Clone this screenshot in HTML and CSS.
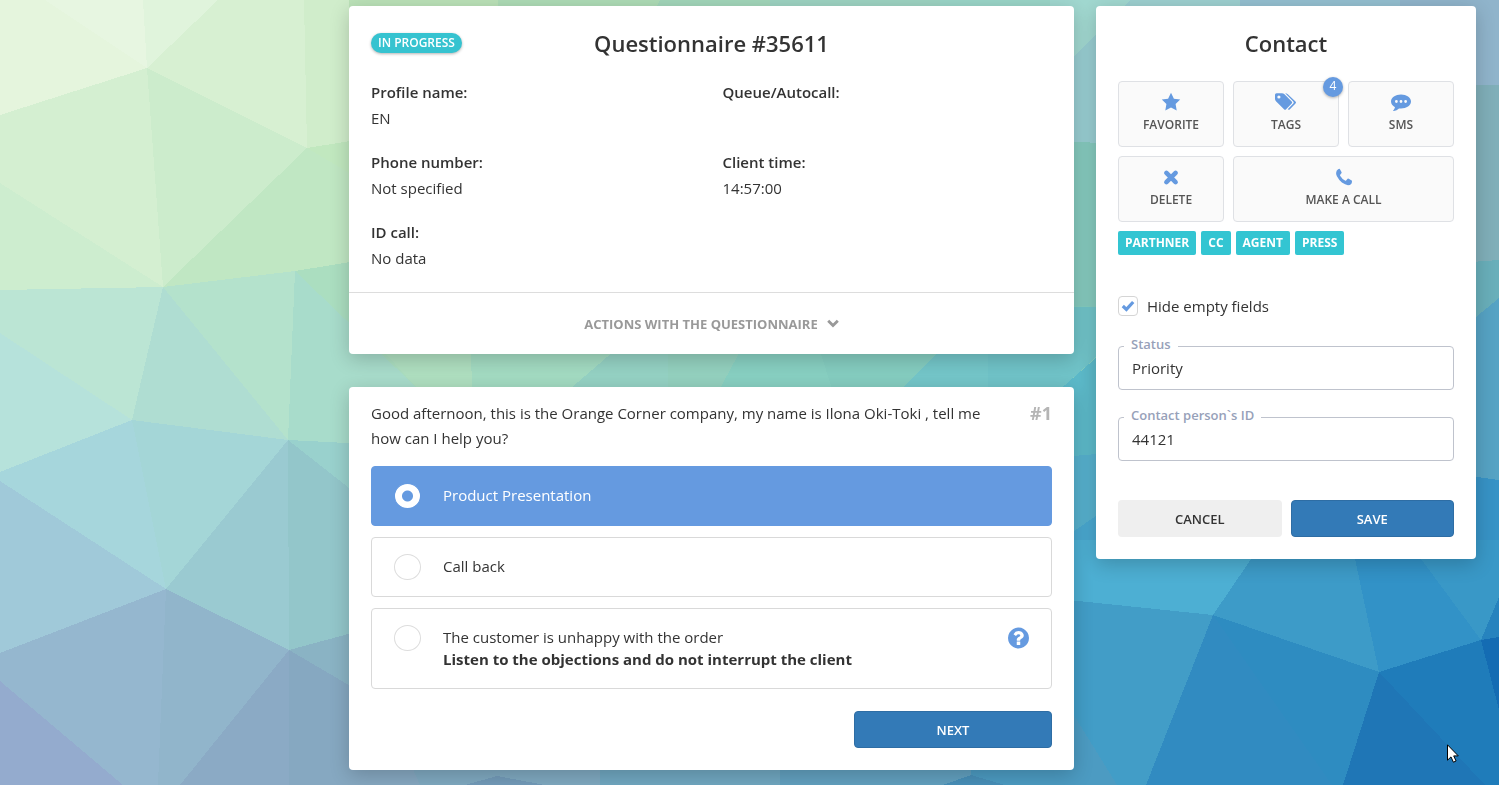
FILE: index.html
```html
<!DOCTYPE html>
<html lang="en">
<head>
  <meta charset="UTF-8">
  <meta name="viewport" content="width=device-width, initial-scale=1.0">
  <title>Questionnaire #35611</title>
  <link rel="stylesheet" href="styles.css">
</head>
<body>
  <!-- Low-poly background -->
  <svg class="backdrop" viewBox="0 0 1499 785" preserveAspectRatio="xMidYMid slice" aria-hidden="true">
    <rect width="1499" height="785" fill="#84cdbf"/>
    <polygon fill="#e5f5dd" points="0,0 147,0 147,68 0,115"/>
    <polygon fill="#e7f6e1" points="45,0 143,0 147,68"/>
    <polygon fill="#e0f4dc" points="143,0 218,0 147,68"/>
    <polygon fill="#d7f0d2" points="218,0 304,0 307,148 147,68"/>
    <polygon fill="#d0edcb" points="304,0 400,0 400,133 307,148"/>
    <polygon fill="#d4efd1" points="0,115 147,68 163,287 0,183"/>
    <polygon fill="#cdedcf" points="0,183 163,287 0,290"/>
    <polygon fill="#cceccc" points="147,68 307,148 163,287"/>
    <polygon fill="#c0e7c3" points="307,148 400,133 400,254 295,271 163,287"/>
    <polygon fill="#c1e8bf" points="307,148 400,133 400,203"/>
    <polygon fill="#bbe5d4" points="0,290 163,287 132,420 0,333"/>
    <polygon fill="#b6e2db" points="0,333 132,420 0,472"/>
    <polygon fill="#afddd2" points="163,287 288,440 132,420"/>
    <polygon fill="#b4e2cc" points="163,287 295,271 288,440"/>
    <polygon fill="#a8dccb" points="295,271 446,416 446,448 288,440"/>
    <polygon fill="#abdec0" points="295,271 400,254 470,354 446,416"/>
    <polygon fill="#a6d6dc" points="0,472 132,420 166,589 0,481"/>
    <polygon fill="#a4d6d7" points="132,420 288,440 166,589"/>
    <polygon fill="#a0c9d9" points="0,481 166,589 0,653"/>
    <polygon fill="#9acad1" points="288,440 289,650 166,589"/>
    <polygon fill="#93c6ca" points="288,440 400,528 400,620 289,650"/>
    <polygon fill="#99d1cd" points="288,440 446,448 400,528"/>
    <polygon fill="#95b7cf" points="0,653 166,589 162,785 123,785 0,681"/>
    <polygon fill="#91b5cb" points="166,589 289,650 180,785 158,785"/>
    <polygon fill="#94abce" points="0,681 123,785 0,785"/>
    <polygon fill="#8baac5" points="289,650 289,785 180,785"/>
    <polygon fill="#86a8c1" points="289,650 400,715 460,785 289,785"/>
    <polygon fill="#8ab3c4" points="289,650 400,620 400,715"/>
    <!-- top edge -->
    <polygon fill="#bbe2b8" points="349,0 498,0 498,40 349,40"/>
    <polygon fill="#aedcb6" points="498,0 660,0 640,40 498,40"/>
    <polygon fill="#a2d6ba" points="660,0 770,0 770,40 640,40"/>
    <polygon fill="#9dd3c2" points="770,0 940,0 940,40 770,40"/>
    <polygon fill="#9ad5c8" points="940,0 1130,0 1074,57 940,57"/>
    <!-- middle band -->
    <polygon fill="#afdfc0" points="355,320 470,320 473,420 446,420"/>
    <polygon fill="#a3dbc2" points="470,320 650,320 534,420 473,420"/>
    <polygon fill="#95d2c4" points="650,320 668,320 668,420 534,420"/>
    <polygon fill="#94d1bf" points="668,320 757,320 703,420 668,420"/>
    <polygon fill="#88d0c2" points="757,320 810,320 842,420 703,420"/>
    <polygon fill="#85cdc0" points="810,320 971,320 870,420 842,420"/>
    <polygon fill="#74c6c9" points="971,320 988,320 988,420 870,420"/>
    <polygon fill="#70c3c8" points="988,306 1096,307 1096,357 1063,387 988,420"/>
    <!-- gutter between the columns -->
    <polygon fill="#a1d8d0" points="1050,0 1132,0 1050,81"/>
    <polygon fill="#98cdd1" points="1130,0 1130,143 1050,142 1050,81"/>
    <polygon fill="#85c9bd" points="1050,142 1130,143 1130,307 1050,306"/>
    <polygon fill="#5cb9c9" points="1130,328 1130,451 1040,459 1040,407"/>
    <polygon fill="#56b0cd" points="1040,459 1130,451 1130,493 1040,554"/>
    <polygon fill="#49a7cf" points="1040,554 1130,493 1300,520 1251,559 1213,615 1040,597"/>
    <!-- top right -->
    <polygon fill="#9dd0d0" points="1130,0 1240,0 1240,30 1130,30"/>
    <polygon fill="#94bfd0" points="1240,0 1400,0 1400,30 1240,30"/>
    <polygon fill="#90b4cb" points="1400,0 1499,0 1499,85 1400,87"/>
    <polygon fill="#80afb9" points="1400,87 1499,85 1499,260 1400,267"/>
    <polygon fill="#69afba" points="1400,267 1499,260 1499,298 1400,380"/>
    <polygon fill="#56a3c4" points="1499,298 1499,480 1400,466 1400,380"/>
    <polygon fill="#3793c6" points="1400,466 1499,480 1499,597 1400,559"/>
    <!-- bottom right -->
    <polygon fill="#4dafd3" points="1040,540 1264,540 1213,615 1040,597"/>
    <polygon fill="#3d9bc8" points="1264,540 1351,540 1379,672 1213,615"/>
    <polygon fill="#3292c7" points="1351,540 1407,540 1481,640 1379,672"/>
    <polygon fill="#3998c7" points="1407,540 1499,540 1499,597 1481,640"/>
    <polygon fill="#2683be" points="1499,597 1499,637 1481,640"/>
    <polygon fill="#429dc7" points="1040,597 1213,615 1146,785 1040,785"/>
    <polygon fill="#4c9bc2" points="1040,660 1117,785 1040,785"/>
    <polygon fill="#318bc1" points="1213,615 1332,785 1146,785"/>
    <polygon fill="#2e8cc1" points="1213,615 1379,672 1343,785 1332,785"/>
    <polygon fill="#1f76b6" points="1379,672 1485,785 1343,785"/>
    <polygon fill="#1f7cba" points="1379,672 1481,640 1499,710 1499,785 1485,785"/>
    <polygon fill="#146cb3" points="1481,640 1499,637 1499,710"/>
    <!-- bottom edge -->
    <polygon fill="#7fa9c0" points="400,740 600,740 600,785 420,785"/>
    <polygon fill="#739bb9" points="465,785 497,776 545,785"/>
    <polygon fill="#70a7c0" points="600,740 780,740 780,785 600,785"/>
    <polygon fill="#62a0bf" points="780,740 971,740 971,785 780,785"/>
    <polygon fill="#4c9bc2" points="971,740 1050,740 1050,785 971,785"/>
    <polygon fill="#4890b9" points="943,785 971,775 1005,785"/>
  </svg>

  <main class="layout">
    <div class="column">
      <section class="card questionnaire">
        <div class="questionnaire-body">
          <header class="card-header">
            <span class="status-pill">IN PROGRESS</span>
            <h1 class="card-title">Questionnaire #35611</h1>
          </header>
          <dl class="details">
            <div>
              <dt>Profile name:</dt>
              <dd>EN</dd>
            </div>
            <div>
              <dt>Queue/Autocall:</dt>
              <dd></dd>
            </div>
            <div>
              <dt>Phone number:</dt>
              <dd>Not specified</dd>
            </div>
            <div>
              <dt>Client time:</dt>
              <dd>14:57:00</dd>
            </div>
            <div>
              <dt>ID call:</dt>
              <dd>No data</dd>
            </div>
          </dl>
        </div>
        <button class="actions-toggle" type="button">
          ACTIONS WITH THE QUESTIONNAIRE
          <svg class="chevron" viewBox="0 0 12 9" aria-hidden="true"><path d="M1.200 1.800 6 6.600 10.800 1.800" fill="none" stroke="currentColor" stroke-width="2.8"/></svg>
        </button>
      </section>

      <form class="card question">
        <div class="question-head">
          <p class="question-text">Good afternoon, this is the Orange Corner company, my name is Ilona Oki-Toki , tell me how can I help you?</p>
          <span class="question-number">#1</span>
        </div>
        <div class="options">
          <label class="option selected">
            <input type="radio" name="answer" checked>
            <span class="option-text">Product Presentation</span>
          </label>
          <label class="option">
            <input type="radio" name="answer">
            <span class="option-text">Call back</span>
          </label>
          <label class="option">
            <input type="radio" name="answer">
            <span class="option-text">The customer is unhappy with the order<strong>Listen to the objections and do not interrupt the client</strong></span>
            <svg class="help" viewBox="0 0 1536 1536" aria-hidden="true"><path fill="currentColor" d="M896 1248v-192q0-14-9-23t-23-9H672q-14 0-23 9t-9 23v192q0 14 9 23t23 9h192q14 0 23-9t9-23zm256-672q0-88-55.500-163T958 297t-170-41q-243 0-371 213-15 24 8 42l132 100q7 6 19 6 16 0 25-12 53-68 86-92 34-24 86-24 48 0 85.500 26t37.500 59q0 38-20 61t-68 45q-63 28-115.500 86.500T640 892v36q0 14 9 23t23 9h192q14 0 23-9t9-23q0-19 21.500-49.500T972 829q32-18 49-28.500t46-35 44.500-48 28-60.500 12.500-81zm384 192q0 209-103 385.500T1153.500 1433 768 1536t-385.500-103T103 1153.500 0 768t103-385.500T382.500 103 768 0t385.500 103T1433 382.500 1536 768z"/></svg>
          </label>
        </div>
        <button class="btn btn-primary btn-next" type="button">NEXT</button>
      </form>
    </div>

    <aside class="card contact">
      <h2 class="card-title">Contact</h2>
      <div class="tiles">
        <button class="tile" type="button">
          <svg viewBox="0 0 20 20" aria-hidden="true"><path d="M10 .8l2.900 5.900 6.300.9-4.600 4.500 1.100 6.400L10 15.500l-5.700 3 1.100-6.400L.8 7.600l6.300-.9z"/></svg>
          FAVORITE
        </button>
        <button class="tile" type="button">
          <svg viewBox="0 0 22 20" aria-hidden="true"><path fill-rule="evenodd" d="M0 2.700Q0 1.200 1.500 1.200h5.400q1.500 0 2.600 1.100l7.200 7.200q1 1.100 0 2.100l-5.600 5.600q-1.100 1-2.100 0L1.200 9.400Q0 8.200 0 6.900zM3.900 3.400a1.600 1.600 0 1 0 0 3.200 1.600 1.600 0 0 0 0-3.200z"/><path d="M10.200 1.200q1.500 0 2.600 1.100l7.700 7.200q1.100 1.100 0 2.100l-5.600 5.600q-1.100 1-2.200.1l5.600-5.700q1-1.100 0-2.100z"/></svg>
          TAGS
          <span class="tile-badge">4</span>
        </button>
        <button class="tile" type="button">
          <svg viewBox="0 0 20 20" aria-hidden="true"><path fill-rule="evenodd" d="M10 2.500c5.500 0 10 3.100 10 7s-4.500 7-10 7q-1 0-2-.1-2.200 2-5.100 2.600-.9.200-.8-.3 1.500-1.600 1.900-3.500C1.600 13.800 0 11.800 0 9.500c0-3.900 4.500-7 10-7zM5.400 8.100a1.400 1.400 0 1 0 0 2.800 1.400 1.400 0 0 0 0-2.800zm4.600 0a1.400 1.400 0 1 0 0 2.800 1.400 1.400 0 0 0 0-2.800zm4.600 0a1.400 1.400 0 1 0 0 2.800 1.400 1.400 0 0 0 0-2.800z"/></svg>
          SMS
        </button>
        <button class="tile" type="button">
          <svg viewBox="0 0 20 20" aria-hidden="true"><path d="M5.400 5.900l9.200 9.200M14.600 5.900 5.400 15.100" stroke="currentColor" stroke-width="4.600" stroke-linecap="round"/></svg>
          DELETE
        </button>
        <button class="tile tile-wide" type="button">
          <svg viewBox="0 0 20 20" aria-hidden="true"><path d="M18 14.200q0 1.200-.6 2.500-1.200 1.500-3.400 1.500-2.800-.3-6.100-2.700-3.200-2.700-5-6.200-.9-2-.8-3.400Q2.200 3.300 4.100 2.200q1.100-.5 1.700-.3.600.7 1.700 3.200.4.700-.1 1.200L6.200 7.700q-.4.500.1 1.200 1.700 2.900 4.700 4.600.7.400 1.100 0l1.500-1.700q.5-.5 1.100-.1l3 1.700q.3.200.3.800z"/></svg>
          MAKE A CALL
        </button>
      </div>
      <div class="tags">
        <span class="tag">PARTHNER</span>
        <span class="tag">CC</span>
        <span class="tag">AGENT</span>
        <span class="tag">PRESS</span>
      </div>
      <form class="contact-form">
        <label class="hide-empty">
          <span class="checkbox">
            <input type="checkbox" checked>
            <svg viewBox="0 0 14 12" aria-hidden="true"><path d="M1.800 6 5.400 9.400 12.200 2" fill="none" stroke="currentColor" stroke-width="3.200"/></svg>
          </span>
          Hide empty fields
        </label>
        <div class="field">
          <label for="status">Status</label>
          <input type="text" id="status" value="Priority">
        </div>
        <div class="field">
          <label for="personId">Contact person`s ID</label>
          <input type="text" id="personId" value="44121">
        </div>
        <div class="form-buttons">
          <button class="btn btn-light" type="button">CANCEL</button>
          <button class="btn btn-primary" type="button">SAVE</button>
        </div>
      </form>
    </aside>
  </main>

  <svg class="pointer" viewBox="0 0 12 19" aria-hidden="true"><path d="M.5.800v15.400l3.500-3.300 2.400 5.300 2.700-1.200-2.400-5.100h4.600z" fill="#fff" stroke="#000"/></svg>
</body>
</html>
```
FILE: styles.css
```css
/* Base */
* { margin: 0; padding: 0; box-sizing: border-box; }
body {
  background: #84cdbf;
  color: #333;
  font-family: "Open Sans", "Noto Sans", sans-serif;
  font-size: 15px;
  line-height: 22px;
  min-height: 100vh;
}
button, input { font-family: inherit; }
button { cursor: pointer; }

.backdrop {
  position: fixed;
  top: 0;
  left: 0;
  width: 100%;
  height: 100%;
  z-index: -1;
  shape-rendering: crispEdges;
}

/* Layout */
.layout {
  display: grid;
  grid-template-columns: minmax(0, 1fr) 380px;
  gap: 22px;
  align-items: start;
  padding: 6px 23px 15px 349px;
}
.column {
  display: flex;
  flex-direction: column;
  gap: 33px;
}
.card {
  background: #fff;
  border-radius: 4px;
  box-shadow: 0 5px 20px rgba(0, 0, 0, 0.2);
}
.card-title {
  font-size: 22px;
  font-weight: 600;
  line-height: 30px;
  text-align: center;
}

/* Questionnaire */
.questionnaire-body { padding: 22px 22px 21px; }
.card-header {
  display: grid;
  grid-template-columns: 1fr auto 1fr;
  align-items: center;
  margin-bottom: 21px;
}
.status-pill {
  justify-self: start;
  padding: 0 7px;
  border-radius: 10px;
  background: #36c3d0;
  box-shadow: 0 1px 3px rgba(0, 0, 0, 0.3);
  color: #fff;
  font-size: 12px;
  font-weight: 600;
  line-height: 20px;
}
.details {
  display: grid;
  grid-template-columns: 1fr 1fr;
  column-gap: 22px;
  row-gap: 18px;
  line-height: 26px;
}
.details dt { font-weight: 600; }
.actions-toggle {
  display: flex;
  align-items: center;
  justify-content: center;
  gap: 9px;
  width: 100%;
  height: 62px;
  border: 0;
  border-top: 1px solid #ddd;
  background: none;
  color: #999;
  font-size: 13px;
  font-weight: 700;
}
.chevron { width: 12px; height: 9px; }

/* Question */
.question { padding: 14px 22px 22px; }
.question-head {
  display: flex;
  justify-content: space-between;
  gap: 22px;
  line-height: 25px;
}
.question-number {
  color: #b5b5b5;
  font-size: 18px;
  font-weight: 700;
}
.options {
  display: flex;
  flex-direction: column;
  gap: 11px;
  margin: 15px 0 22px;
}
.option {
  display: flex;
  align-items: flex-start;
  gap: 22px;
  padding: 16px 22px;
  border: 1px solid #d9d9d9;
  border-radius: 4px;
  cursor: pointer;
}
.option input {
  appearance: none;
  flex: none;
  width: 27px;
  height: 26px;
  border: 1px solid #ddd;
  border-radius: 50%;
  background: #fff;
}
.option.selected {
  background: #659ae0;
  border-color: #659ae0;
  color: #fff;
}
.option.selected input {
  border-color: #659ae0;
  background: radial-gradient(circle, #659ae0 5px, #fff 6px);
}
.option-text {
  flex: 1;
  padding: 1px 0 2px;
}
.option-text strong { display: block; }
.help {
  width: 21px;
  height: 26px;
  color: #659ae0;
}

.btn {
  height: 37px;
  border: 1px solid transparent;
  border-radius: 4px;
  font-size: 13px;
  font-weight: 600;
}
.btn-primary {
  background: #337ab7;
  border-color: #2e6da4;
  color: #fff;
}
.btn-light {
  background: #efefef;
  color: #333;
}
.btn-next {
  display: block;
  width: 198px;
  margin-left: auto;
}

/* Contact */
.contact { padding: 22px; }
.tiles {
  display: grid;
  grid-template-columns: repeat(3, 1fr);
  gap: 9px;
  margin-top: 23px;
}
.tile {
  position: relative;
  display: flex;
  flex-direction: column;
  align-items: center;
  gap: 4px;
  height: 66px;
  padding-top: 10px;
  border: 1px solid #dfe1e5;
  border-radius: 4px;
  background: #fafafa;
  color: #555;
  font-size: 12px;
  font-weight: 600;
  line-height: 18px;
}
.tile svg {
  width: 22px;
  height: 20px;
  color: #659ae0;
  fill: currentColor;
}
.tile-wide { grid-column: span 2; }
.tile-badge {
  position: absolute;
  top: -5px;
  right: -5px;
  width: 20px;
  height: 20px;
  border-radius: 50%;
  background: #659ae0;
  box-shadow: 0 1px 3px rgba(0, 0, 0, 0.3);
  color: #fff;
  font-weight: 400;
}
.tags {
  display: flex;
  flex-wrap: wrap;
  gap: 5px;
  margin: 9px 0 41px;
}
.tag {
  padding: 0 7px;
  border-radius: 2px;
  background: #33c5d2;
  color: #fff;
  font-size: 12px;
  font-weight: 700;
  line-height: 24px;
}
.hide-empty {
  display: flex;
  align-items: center;
  gap: 9px;
  height: 20px;
}
.checkbox {
  position: relative;
  width: 20px;
  height: 20px;
}
.checkbox input {
  appearance: none;
  display: block;
  width: 20px;
  height: 20px;
  border: 1px solid #d5d5d5;
  border-radius: 4px;
}
.checkbox svg {
  position: absolute;
  top: 4px;
  left: 3px;
  width: 14px;
  height: 12px;
  color: #659ae0;
}
.checkbox input:not(:checked) + svg { display: none; }
.field {
  position: relative;
  margin-top: 27px;
}
.hide-empty + .field { margin-top: 30px; }
.field label {
  position: absolute;
  top: -12px;
  left: 6px;
  padding: 0 7px;
  background: #fff;
  color: #97a1b9;
  font-size: 13px;
  font-weight: 600;
  line-height: 20px;
}
.field input {
  display: block;
  width: 100%;
  height: 44px;
  padding: 0 13px;
  border: 1px solid #bfc3cd;
  border-radius: 4px;
  background: #fff;
  color: #333;
  font-size: 15px;
}
.form-buttons {
  display: grid;
  grid-template-columns: 1fr 1fr;
  gap: 9px;
  margin-top: 39px;
}

.pointer {
  position: fixed;
  right: 40px;
  bottom: 22px;
  width: 12px;
  height: 19px;
}

/* Responsive */
@media (max-width: 1200px) {
  .layout { padding-left: 23px; }
}
@media (max-width: 800px) {
  .layout { grid-template-columns: 1fr; }
}
```
